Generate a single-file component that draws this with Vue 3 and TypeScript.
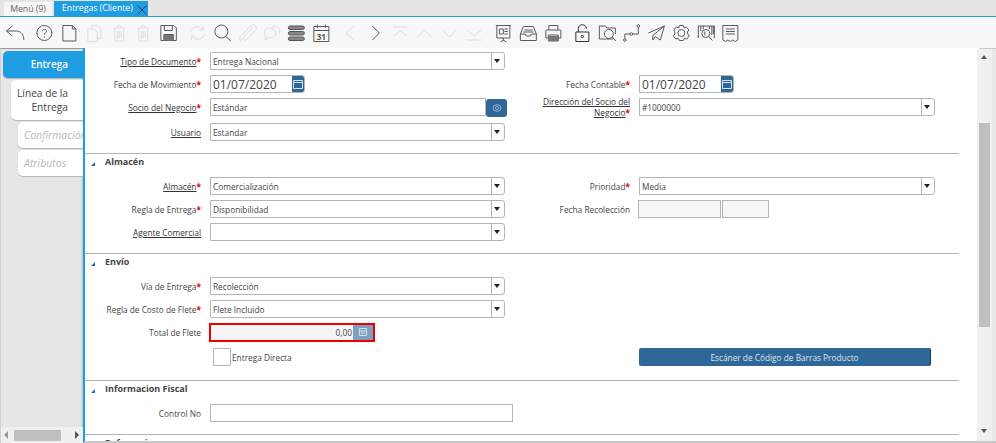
<script setup lang="ts">
const sideTabs: string[] = ['Confirmación', 'Atributos']
</script>

<template>
  <div class="app">
    <nav class="tabs">
      <div class="tab">Menú (9)</div>
      <div class="tab active">
        Entregas (Cliente)
        <svg class="close" width="10" height="10" viewBox="0 0 10 10"><path d="M0.5 0.5 9.5 9.5M9.5 0.5 0.5 9.5" stroke="#24465f" stroke-width="1" fill="none" /></svg>
      </div>
    </nav>

    <div class="toolbar">
      <div class="group">
        <svg class="ic" viewBox="0 0 24 24"><path d="M3 10 9 5M3 10 9 15M3 10H13C18 10 20.500 14 20.500 19" /></svg>
      </div>
      <div class="group">
        <svg class="ic" viewBox="0 0 24 24"><circle cx="12" cy="12" r="7.500" /><path d="M10 10.200C10 7.800 14.200 7.800 14.200 10.200 14.200 11.800 12 11.800 12 13.800M12 15.300V16.500" /></svg>
        <svg class="ic" viewBox="0 0 24 24"><path d="M5.500 4.500H15L18.500 8V20H5.500ZM15 4.500V8H18.500" /></svg>
        <svg class="ic off" viewBox="0 0 24 24"><path d="M9 7.500V4.500H15L18.500 8V17.500H15M5.500 8H12L15 11V20.500H5.500Z" /></svg>
        <svg class="ic off" viewBox="0 0 24 24"><path d="M6 7H18M10 7V5H14V7M7.500 7V20H16.500V7M10 10V17M12 10V17M14 10V17" /></svg>
        <svg class="ic off" viewBox="0 0 24 24"><path d="M6 7H18M10 7V5H14V7M7.500 7V20H16.500V7M10 10V17M12 10V17M14 10V17" /></svg>
        <svg class="ic" viewBox="0 0 24 24"><path d="M4.500 4.500H17.500L20 7V19.500H4.500ZM8 4.500V9.500H16V4.500M7.500 19.500V13.500H17V19.500" /><path class="fill" d="M7.500 14H17V19.500H7.500Z" /></svg>
      </div>
      <div class="group">
        <svg class="ic off" viewBox="0 0 24 24"><path d="M5 11C5.500 5.500 14 3.500 18 9M18 5V9H14M19 13C18.500 18.500 10 20.500 6 15M6 19V15H10" /></svg>
        <svg class="ic" viewBox="0 0 24 24"><circle cx="11" cy="10.500" r="6.500" /><path d="M15.500 15.500 20.500 20" /></svg>
        <svg class="ic off" viewBox="0 0 24 24"><path d="M18 6 8.500 15.500C6 18 9 20.500 11 18.500L20 9.500C23 6 18.500 2 15.500 5L6 14.500C3.500 17.500 4.500 19.500 6 20.500" /></svg>
        <svg class="ic off" viewBox="0 0 24 24"><path d="M10 7C14 7 16.500 9 16.500 12 16.500 15 13 17 9.500 16.500L5.500 18.500 6.500 15C3.500 12 5.500 7 10 7ZM12 6.500C14 4.500 21 5.500 20.500 10 20.500 11.500 19.500 12.500 18.500 13.500" /></svg>
        <svg class="ic grid-ic" viewBox="0 0 24 24"><rect x="4" y="5" width="16" height="3.500" rx="1.700" /><rect x="4" y="10.500" width="16" height="3.500" rx="1.700" /><rect x="4" y="16" width="16" height="3.500" rx="1.700" /></svg>
        <svg class="ic" viewBox="0 0 24 24"><path d="M4.500 5.500H19.500V20.500H4.500ZM4.500 9.500H19.500M8 3.500V7M16 3.500V7" /><text x="12" y="18.500" text-anchor="middle" class="cal">31</text></svg>
      </div>
      <div class="group">
        <svg class="ic off" viewBox="0 0 24 24"><path d="M15 5 8 12 15 19" /></svg>
        <svg class="ic" viewBox="0 0 24 24"><path d="M9 5 16 12 9 19" /></svg>
        <svg class="ic off" viewBox="0 0 24 24"><path d="M5 6H19M6 15 12 9 18 15" /></svg>
        <svg class="ic off" viewBox="0 0 24 24"><path d="M5 16 12 9 19 16" /></svg>
        <svg class="ic off" viewBox="0 0 24 24"><path d="M5 9 12 16 19 9" /></svg>
        <svg class="ic off" viewBox="0 0 24 24"><path d="M5 19H19M5 9 12 15 19 9" /></svg>
      </div>
      <div class="group">
        <svg class="ic" viewBox="0 0 24 24"><path d="M4.500 4.500H19.500M5.500 4.500V17H18.500V4.500M12 17V19.500M9 21 12 19 15 21M8 8H12V13H8ZM13 8H16.500M13 10.500H16.500M13 13H16.500" /></svg>
        <svg class="ic" viewBox="0 0 24 24"><path d="M4 13 7 5.500H17L20 13V19.500H4ZM4 13H9L10 15H14L15 13H20M8 9H16M7 11H17" /></svg>
        <svg class="ic" viewBox="0 0 24 24"><path d="M7.500 9V4.500H16.500V9M7 17H4.500V9.500Q4.500 9 5 9H19Q19.500 9 19.500 9.500V17H17M7 14H17V20H7Z" /><path class="fill" d="M7 15H17V20H7Z" /></svg>
      </div>
      <div class="group">
        <svg class="ic dark" viewBox="0 0 24 24"><path d="M5.500 11H18.500V20.500H5.500ZM8 11V7.500C8 2.500 16 2.500 16 7.500V8" /><circle cx="12" cy="15.500" r="1.200" /></svg>
        <svg class="ic" viewBox="0 0 24 24"><path d="M18 18H4V5H10L11.500 7H20V13" /><circle cx="13.500" cy="13" r="4.500" /><path d="M17 16 20.500 20" /></svg>
        <svg class="ic" viewBox="0 0 24 24"><circle cx="5.500" cy="19" r="1.300" /><circle cx="12" cy="13" r="1.300" /><circle cx="19" cy="5" r="1.300" /><path d="M5.500 17.700V13H10.700M13.300 13H19V6.300" /></svg>
        <svg class="ic" viewBox="0 0 24 24"><path d="M4 12 20 5 16 19 11 15.500 8.500 19V14.500L20 5" /></svg>
        <svg class="ic" viewBox="0 0 24 24"><path d="M10 4.500H14L14.700 7 17 6 19.500 9 18 11 18.500 13 20 15 17.500 18 15 17.500 14 19.500H10L9 17.500 6.500 18 4 15 5.500 13 5.500 11 4.500 9 7 6 9.300 7Z" /><circle cx="12" cy="12" r="3.500" /></svg>
        <svg class="ic" viewBox="0 0 24 24"><path d="M4 17V5H20V17M6.500 5V10M9 5V8M15 5V8M17.500 5V14M19 5V13" /><circle cx="11.500" cy="12.500" r="4" /><path d="M14.500 15.500 18 19.500M10.500 10.500V14.500" /></svg>
        <svg class="ic" viewBox="0 0 24 24"><path d="M4.500 4.500H19.500V19L17 20.500 14.500 19 12 20.500 9.500 19 7 20.500 4.500 19ZM7.500 8H16.500M7.500 10.500H16.500M7.500 13H16.500" /></svg>
      </div>
    </div>

    <div class="body">
      <aside class="side">
        <div class="side-tabs">
          <div class="stab first">Entrega</div>
          <div class="stab second">Línea de la<br />Entrega</div>
          <div v-for="t in sideTabs" :key="t" class="stab sub">{{ t }}</div>
        </div>
        <div class="hbar">
          <i class="arr left"></i>
          <div class="hthumb"></div>
          <i class="arr right"></i>
        </div>
      </aside>

      <main class="main">
        <section class="sec top">
          <div class="grid">
            <label class="lbl"><u>Tipo de Documento</u><b>*</b></label>
            <div class="sel"><span>Entrega Nacional</span><i class="dd"></i></div>

            <label class="lbl">Fecha de Movimiento<b>*</b></label>
            <div class="date"><span>01/07/2020</span><i class="calbtn"><svg width="10" height="10" viewBox="0 0 10 10"><path d="M0.500 1.500H9.500V9.500H0.500ZM0.500 3.500H9.500" fill="none" stroke="#d7e3ee" /></svg></i></div>
            <label class="lbl r">Fecha Contable<b>*</b></label>
            <div class="date"><span>01/07/2020</span><i class="calbtn"><svg width="10" height="10" viewBox="0 0 10 10"><path d="M0.500 1.500H9.500V9.500H0.500ZM0.500 3.500H9.500" fill="none" stroke="#d7e3ee" /></svg></i></div>

            <label class="lbl"><u>Socio del Negocio</u><b>*</b></label>
            <div class="search"><div class="input"><span>Estándar</span></div><i class="sbtn"><svg width="10" height="8" viewBox="0 0 10 8"><ellipse cx="5" cy="4" rx="4" ry="3.300" fill="none" stroke="#8fb0cc" /><circle cx="5" cy="4" r="1.600" fill="none" stroke="#8fb0cc" /></svg></i></div>
            <label class="lbl r"><u>Dirección del Socio del<br />Negocio</u><b>*</b></label>
            <div class="sel"><span>#1000000</span><i class="dd"></i></div>
          </div>
          <div class="grid user-row">
            <label class="lbl"><u>Usuario</u></label>
            <div class="sel"><span>Estandar</span><i class="dd"></i></div>
          </div>
        </section>

        <section class="sec">
          <h3 class="head"><i class="tri"></i>Almacén</h3>
          <div class="grid">
            <label class="lbl"><u>Almacén</u><b>*</b></label>
            <div class="sel"><span>Comercialización</span><i class="dd"></i></div>
            <label class="lbl r">Prioridad<b>*</b></label>
            <div class="sel"><span>Media</span><i class="dd"></i></div>

            <label class="lbl">Regla de Entrega<b>*</b></label>
            <div class="sel"><span>Disponibilidad</span><i class="dd"></i></div>
            <label class="lbl r">Fecha Recolección</label>
            <div class="pickup"><div class="ro a"></div><div class="ro b"></div></div>

            <label class="lbl"><u>Agente Comercial</u></label>
            <div class="sel"><span></span><i class="dd"></i></div>
          </div>
        </section>

        <section class="sec">
          <h3 class="head"><i class="tri"></i>Envío</h3>
          <div class="grid">
            <label class="lbl">Vía de Entrega<b>*</b></label>
            <div class="sel"><span>Recolección</span><i class="dd"></i></div>

            <label class="lbl">Regla de Costo de Flete<b>*</b></label>
            <div class="sel"><span>Flete Incluido</span><i class="dd"></i></div>

            <label class="lbl">Total de Flete</label>
            <div class="amount"><span>0,00</span><i class="numbtn"><svg width="8" height="8" viewBox="0 0 8 8"><path d="M0.500 0.500H7.500V7.500H0.500ZM0.500 3H7.500M2 5H6" fill="none" stroke="#d4dfe9" /></svg></i></div>
          </div>
          <div class="grid check-row">
            <label class="chk"><i class="box"></i>Entrega Directa</label>
            <button class="scan" type="button">Escáner de Código de Barras Producto</button>
          </div>
        </section>

        <section class="sec">
          <h3 class="head"><i class="tri"></i>Informacion Fiscal</h3>
          <div class="grid">
            <label class="lbl">Control No</label>
            <div class="input ctrl"></div>
          </div>
        </section>

        <section class="sec last">
          <h3 class="head"><i class="tri"></i>Referencia</h3>
        </section>
      </main>

      <div class="vbar">
        <i class="up"></i>
        <div class="vthumb"></div>
        <i class="down"></i>
      </div>
    </div>
  </div>
</template>

<style>
html, body { margin: 0; background: #fff; overflow: hidden; }
</style>

<style scoped>
.app { width: 996px; height: 443px; display: flex; flex-direction: column; overflow: hidden; font-family: "Open Sans", "Noto Sans", sans-serif; font-size: 9px; color: #444; }

.tabs { height: 16px; background: #e5e5e5; border-bottom: 1px solid #1a9fe6; display: flex; align-items: flex-end; padding-left: 4px; gap: 2px; flex: none; }
.tab { height: 14px; width: 48px; background: #f6f6f6; font-size: 8.700px; line-height: 15px; text-align: center; color: #666; }
.tab.active { width: 94px; height: 15px; background: #1e9de2; color: #fff; position: relative; padding-left: 8px; text-align: left; box-sizing: border-box; }
.close { position: absolute; right: 1px; top: 4px; }

.toolbar { height: 31px; flex: none; background: #f7f7f7; display: flex; align-items: center; padding-left: 3px; gap: 4.800px; }
.group { display: flex; }
.ic { width: 24.700px; height: 24px; fill: none; stroke: #5a5a5a; stroke-width: 1; }
.ic.off { stroke: #dcdcdc; }
.ic.dark { stroke: #333; }
.ic .fill { fill: #777; stroke: none; }
.grid-ic { fill: #888; stroke: #555; }
.cal { font-size: 8px; font-weight: 700; fill: #555; stroke: none; font-family: "Open Sans", sans-serif; }

.body { flex: 1; display: flex; min-height: 0; background: #c8c8c8; }
.side { width: 83px; flex: none; background: #e6e6e6; display: flex; flex-direction: column; box-sizing: border-box; border-left: 1px solid #d0d0d0; border-top: 1px solid #999; box-shadow: inset -2px 0 2px -1px #bdbdbd; }
.side-tabs { flex: 1; padding: 2px 0 0 2px; display: flex; flex-direction: column; align-items: flex-end; overflow: hidden; }
.stab { background: #fff; border-radius: 5px 0 0 5px; box-sizing: border-box; text-align: right; padding-right: 15px; box-shadow: 0 1px 1px #b5b5b5; }
.first { width: 80px; height: 27px; background: #1e9de2; color: #fff; line-height: 27px; font-size: 10px; font-weight: 600; }
.second { width: 72px; height: 40px; margin-top: 2px; line-height: 14px; padding-top: 6px; color: #444; font-size: 10.200px; }
.sub { width: 65px; height: 26px; margin-top: 2px; font-style: italic; color: #b8b8b8; font-size: 10.500px; line-height: 26px; text-align: left; padding: 0 0 0 6px; white-space: nowrap; overflow: hidden; }
.hbar { height: 16px; flex: none; background: #f0f0f0; display: flex; align-items: center; padding: 0 4px 0 3px; }
.hthumb { width: 47px; height: 11px; background: #bfbfbf; margin-left: 6px; }
.arr { width: 0; height: 0; border: 4px solid transparent; }
.arr.left { border-right: 4px solid #999; border-left: 0; }
.arr.right { border-left: 4px solid #555; border-right: 0; margin-left: auto; }

.main { flex: 1; min-width: 0; border-left: 2px solid #1a9fe6; background: #fff; overflow: hidden; height: 395px; box-sizing: border-box; border-bottom: 2px solid #c8c8c8; }
.sec { width: 874px; box-sizing: border-box; border-top: 1px solid #b4b4b4; padding-bottom: 12px; }
.sec.top { border-top: 0; padding-top: 4px; }
.sec.last { padding-bottom: 0; }
.head { height: 15px; margin: 0; padding: 0 0 8px 20px; font-size: 9px; line-height: 15px; font-weight: 700; color: #444; position: relative; }
.tri { position: absolute; left: 6px; top: 8px; width: 0; height: 0; border-left: 4px solid transparent; border-bottom: 4px solid #2f6797; }

.grid { display: grid; grid-template-columns: 116px 295px 116px 296px; column-gap: 9px; row-gap: 5px; grid-auto-rows: 18px; align-items: center; }
.user-row { margin-top: 7px; }
.lbl { grid-column: 1; text-align: right; font-size: 8.300px; line-height: 11px; color: #444; display: block; white-space: nowrap; }
.lbl.r { grid-column: 3; }
.lbl u { color: #333; }
.lbl b { color: #e00000; font-weight: 700; }

.sel, .input, .date, .amount { height: 18px; box-sizing: border-box; border: 1px solid #b5b5b5; background: #fff; font-size: 8.300px; line-height: 17px; color: #444; }
.sel { display: flex; justify-content: space-between; border-radius: 0 3px 3px 0; }
.sel span, .input span { padding-left: 2px; }
.dd { width: 12px; border-left: 1px solid #b5b5b5; position: relative; flex: none; }
.dd::after { content: ""; position: absolute; left: 2px; top: 6px; border: 3.500px solid transparent; border-top: 4px solid #222; border-bottom: 0; }

.date { width: 95px; display: flex; justify-content: space-between; font-size: 12px; border-radius: 0 3px 3px 0; }
.date span { padding-left: 2px; }
.calbtn { width: 12px; background: #2f6797; display: flex; align-items: center; justify-content: center; border-radius: 0 2px 2px 0; }

.search { display: flex; width: 297px; height: 19px; align-self: start; }
.search .input { flex: 1; height: 18px; }
.sbtn { width: 21px; height: 18px; margin-top: 1px; background: #2f6797; border-radius: 3px; display: flex; align-items: center; justify-content: center; }

.pickup { display: flex; gap: 1px; margin-left: -1px; }
.ro { height: 18px; box-sizing: border-box; border: 1px solid #b5b5b5; background: #f6f6f6; }
.ro.a { width: 83px; }
.ro.b { width: 47px; }

.amount { width: 166px; height: 19px; margin-left: -1px; border: 2px solid #ee0000; background: #f5f5f5; display: flex; justify-content: flex-end; }
.amount span { padding-right: 1px; line-height: 15px; }
.numbtn { width: 20px; background: #7d9fbf; display: flex; align-items: center; justify-content: center; }

.check-row { margin-top: 7px; margin-bottom: 2px; }
.chk { grid-column: 2; display: flex; align-items: center; gap: 1px; padding-left: 3px; font-size: 8.300px; color: #444; }
.box { width: 16px; height: 16px; border: 1px solid #b5b5b5; background: #fff; border-radius: 1px; display: block; }
.scan { grid-column: 4; width: 292px; height: 18px; padding: 0; border: 0; border-right: 1px solid #123a5c; border-radius: 2px; background: #2f6797; color: #dfe6ec; font: 8.300px "Open Sans", sans-serif; }

.ctrl { width: 303px; }

.vbar { width: 15px; flex: none; background: #f0f0f0; margin: 1px 0 2px -2px; position: relative; border-right: 4px solid #e9e9e9; }
.up { position: absolute; left: 4px; top: 6px; border: 3.500px solid transparent; border-bottom: 4px solid #555; border-top: 0; }
.down { position: absolute; left: 4px; bottom: 8px; border: 3.500px solid transparent; border-top: 4px solid #555; border-bottom: 0; }
.vthumb { position: absolute; left: 2px; top: 74px; width: 11px; height: 204px; background: #bfbfbf; }
</style>
